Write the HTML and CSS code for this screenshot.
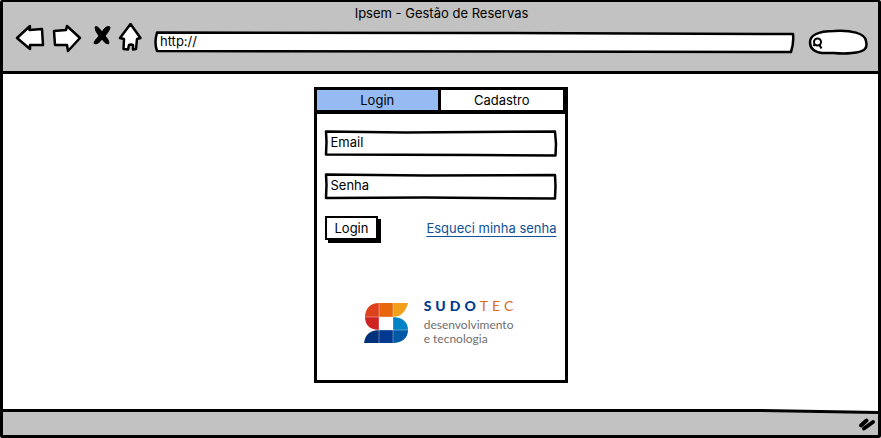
FILE: index.html
```html
<!DOCTYPE html>
<html lang="pt-BR">
<head>
<meta charset="utf-8">
<title>Ipsem - Gestão de Reservas</title>
<link rel="stylesheet" href="styles.css">
</head>
<body>
<div class="window">
  <header class="chrome">
    <h1 class="title">Ipsem - Gestão de Reservas</h1>
    <div class="toolbar">
      <button class="nav" type="button" aria-label="Voltar">
        <svg width="30" height="30" viewBox="0 0 30 30"><path d="M2 15 L15 3 L14.500 7 L27 6 L28 22 L15 22 L15 26 Z"/></svg>
      </button>
      <button class="nav nav-forward" type="button" aria-label="Avançar">
        <svg width="30" height="30" viewBox="0 0 30 30"><path d="M2 8 L14 7 L15 3 L28 15 L16 28 L15 22 L3 22 Z"/></svg>
      </button>
      <button class="nav nav-stop" type="button" aria-label="Parar">
        <svg width="18" height="30" viewBox="0 0 18 30"><path d="M2 4 Q4 2 9 9 Q13 2 17 4 Q17 7 12 13 Q17 18 15.500 21 Q12 21 9 16 Q5 22 1 20.500 Q1 18 6 13 Q2 8 2 4 Z" class="solid"/></svg>
      </button>
      <button class="nav" type="button" aria-label="Início">
        <svg width="24" height="30" viewBox="0 0 24 30"><path d="M12.500 1 L22.500 15 L19 16 L18 26 L15 26.500 L15 22 L13 21.500 L11 22 L10 26.500 L5.500 26 L6 16 L2 15 Z"/></svg>
      </button>
      <div class="box address">
        <svg class="sketch" viewBox="0 0 640 22" preserveAspectRatio="none"><path d="M3 1.500 L330 2 L639 3 Q640 12 637 21 L3 20 Q0 12 3 1.500 Z"/></svg>
        <input type="text" value="http://" aria-label="Endereço">
      </div>
      <div class="box search">
        <svg class="sketch" viewBox="0 0 60 26" preserveAspectRatio="none"><path d="M2 13 C2 7 9 2 26 2 C43 1 57 4 58 12 C60 20 56 23 44 24 Q35 25 26 24 L14 24 C6 23 2 19 2 13 Z"/></svg>
        <svg class="lens" width="12" height="14" viewBox="0 0 12 14"><circle cx="5.500" cy="5" r="3.500"/><path d="M7.500 8 L9.500 11.500 M2.500 7.500 L1.500 9"/></svg>
        <input type="search" aria-label="Buscar">
      </div>
    </div>
  </header>

  <main class="page">
    <section class="card">
      <div class="tabs" role="tablist">
        <button class="tab active" type="button" role="tab" aria-selected="true">Login</button>
        <button class="tab" type="button" role="tab" aria-selected="false">Cadastro</button>
      </div>
      <form class="form">
        <div class="box field">
          <svg class="sketch" viewBox="0 0 232 27" preserveAspectRatio="none"><path d="M1 1.500 L80 2.500 L230 1.500 L231 14 L230.500 25.500 L150 25 L1 24.500 L1.500 12 Z"/></svg>
          <input type="email" placeholder="Email" aria-label="Email">
        </div>
        <div class="box field">
          <svg class="sketch" viewBox="0 0 232 27" preserveAspectRatio="none"><path d="M1 1.500 L100 2.500 L230 2 L230.500 13 L230 25.500 L100 24.500 L1 25 L1.500 12 Z"/></svg>
          <input type="password" placeholder="Senha" aria-label="Senha">
        </div>
        <div class="actions">
          <button class="submit" type="button">Login</button>
          <a class="forgot" href="#">Esqueci minha senha</a>
        </div>
      </form>
      <div class="brand">
        <svg class="brand-mark" width="44" height="42" viewBox="0 0 44 42">
          <path d="M15 1 V15 H1 C1 7 6 1 15 1Z" fill="#df411c"/>
          <path d="M15 1 H29 V15 H15Z" fill="#e8670c"/>
          <path d="M29 1 H44 C42 9 37 15 29 15Z" fill="#f2a01c"/>
          <path d="M1 15 H15 V28 C6 28 1 23 1 15Z" fill="#cf2222"/>
          <path d="M29 15 C38 15 44 20 44 28 H29Z" fill="#0082c6"/>
          <path d="M15 28 V41 H0 C1 33 6 28 15 28Z" fill="#00317a"/>
          <path d="M15 28 H29 V41 H15Z" fill="#00398f"/>
          <path d="M29 28 H44 C44 36 38 41 29 41Z" fill="#0059a6"/>
          <path d="M15 1 V41 M29 1 V41 M1 15 H42 M2 28 H44" stroke="#fff" stroke-opacity=".35" fill="none"/>
        </svg>
        <div class="brand-text">
          <p class="brand-name"><b>SUDO</b>TEC</p>
          <p class="brand-line">desenvolvimento<br>e tecnologia</p>
        </div>
      </div>
    </section>
  </main>

  <footer class="status">
    <svg class="edge" viewBox="0 0 876 6" preserveAspectRatio="none"><path class="mask" d="M0 0 H876 V3.500 L760 1.500 L0 1.500 Z"/><path class="stroke" d="M0 1.500 L380 1.500 L760 1.500 L876 3.500"/></svg>
    <svg class="grip" width="18" height="16" viewBox="0 0 18 16"><path d="M3 9.500 L8.500 4.500 M6 12.500 L15 6" /></svg>
  </footer>
</div>
</body>
</html>
```
FILE: styles.css
```css
* { box-sizing: border-box; }

body {
  margin: 0;
  background: #fff;
  color: #000;
  font: 13px/16px Inter, "Open Sans", sans-serif;
}

button, input { font: inherit; color: inherit; }
p, h1 { margin: 0; }
svg { display: block; }

.window {
  display: flex;
  flex-direction: column;
  min-height: 100vh;
  border: 3px solid #000;
  border-width: 2px 3px 3px;
  border-radius: 2px;
}

.chrome {
  background: #c2c2c2;
  border-bottom: 3px solid #000;
  padding: 3px 10px 16px 12px;
}

.title {
  font-size: 13px;
  font-weight: 400;
  line-height: 16px;
  text-align: center;
}

.toolbar {
  display: flex;
  align-items: center;
}

.nav {
  padding: 0;
  border: 0;
  background: none;
}

.nav path {
  fill: #fff;
  stroke: #000;
  stroke-width: 2.5;
  stroke-linejoin: round;
}

.nav .solid { fill: #000; stroke-width: 1; }
.nav-forward { margin-left: 7px; }
.nav-stop { margin: 0 7px 0 11px; }

.box { position: relative; }

.sketch {
  position: absolute;
  inset: 0;
  width: 100%;
  height: 100%;
  overflow: visible;
}

.sketch path {
  fill: #fff;
  stroke: #000;
  stroke-width: 2.5;
  stroke-linejoin: round;
  vector-effect: non-scaling-stroke;
}

.box input {
  position: relative;
  display: block;
  width: 100%;
  height: 100%;
  border: 0;
  padding: 0 6px 3px;
  background: none;
  outline: 0;
}

.box input::placeholder { color: #000; opacity: 1; }

.address {
  flex: 1;
  height: 22px;
  margin: 8px 14px 0 12px;
}

.search {
  width: 60px;
  height: 26px;
  margin-top: 8px;
}

.search input { padding-left: 18px; }

.lens {
  position: absolute;
  left: 4px;
  top: 8px;
  fill: none;
  stroke: #000;
  stroke-width: 2;
}

.page {
  flex: 1;
  padding: 13px 16px 27px;
}

.card {
  display: flex;
  flex-direction: column;
  width: 100%;
  max-width: 254px;
  min-height: 296px;
  margin: 0 auto;
  border: 3px solid #000;
}

.tabs {
  display: flex;
  border-bottom: 4px solid #000;
  border-right: 2px solid #000;
}

.tab {
  flex: 1;
  height: 20px;
  padding: 0;
  border: 0;
  background: #fff;
}

.tab.active {
  background: #95bbf2;
  border-right: 3px solid #000;
}

.form {
  display: flex;
  flex-direction: column;
  gap: 16px;
  padding: 16px 8px 0;
}

.field { height: 27px; }

.actions {
  display: flex;
  align-items: center;
  justify-content: space-between;
}

.submit {
  height: 24px;
  padding: 0 8px;
  border: 2px solid #000;
  background: #fff;
  box-shadow: 3px 3px 0 #000;
}

.forgot {
  color: #11509a;
  text-underline-offset: 3px;
}

.brand {
  display: flex;
  justify-content: center;
  gap: 16px;
  margin-top: 58px;
}

.brand-mark { margin-top: 4px; }

.brand-name {
  color: #e0691d;
  font: 14px/16px Lato, sans-serif;
  letter-spacing: 4px;
}

.brand-name b { color: #00398f; font-weight: 900; }

.brand-line {
  margin-top: 4px;
  color: #6f6f6f;
  font: 12px/14px Lato, sans-serif;
}

.status {
  position: relative;
  display: flex;
  justify-content: flex-end;
  height: 25px;
  padding: 6px 2px 0;
  background: #c2c2c2;
}

.edge {
  position: absolute;
  top: -1px;
  left: 0;
  width: 100%;
  height: 6px;
}

.edge .mask { fill: #fff; }

.edge .stroke {
  fill: none;
  stroke: #000;
  stroke-width: 3;
}

.grip {
  fill: none;
  stroke: #000;
  stroke-width: 4;
  stroke-linecap: round;
}
```
